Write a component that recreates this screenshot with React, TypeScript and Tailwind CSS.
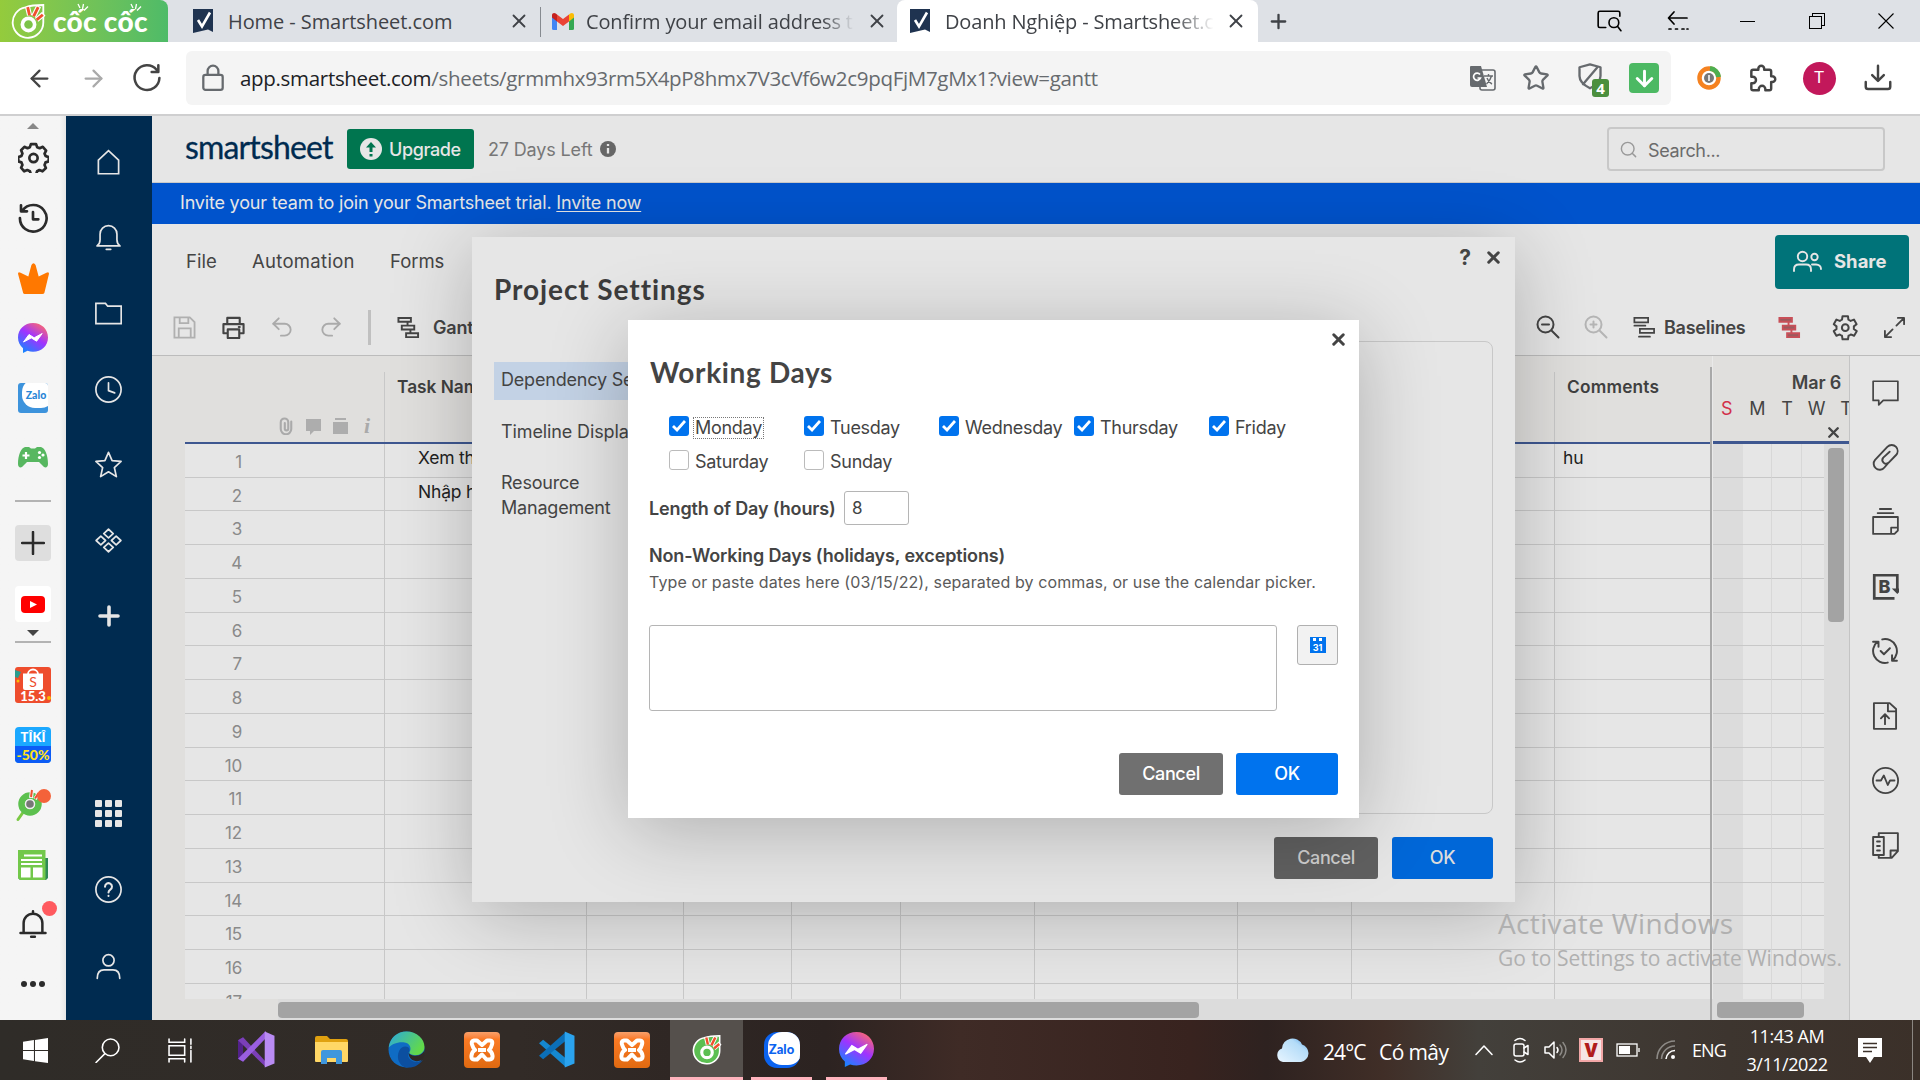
import React from "react";
import {
  ArrowLeft, ArrowRight, ArrowDown, Star, Search, Plus, X, Undo2, Redo2,
} from "lucide-react";

type SvgProps = {
  w?: number;
  h?: number;
  box?: string;
  sw?: number;
  className?: string;
  children: React.ReactNode;
};

function Svg({ w = 27, h, box = "0 0 24 24", sw = 1.5, className = "", children }: SvgProps) {
  return (
    <svg
      width={w}
      height={h ?? w}
      viewBox={box}
      fill="none"
      stroke="currentColor"
      strokeWidth={sw}
      strokeLinecap="round"
      strokeLinejoin="round"
      className={"shrink-0 " + className}
    >
      {children}
    </svg>
  );
}

const gearPath =
  "M19.4 13a7.6 7.6 0 0 0 0-2l2.1-1.6-2-3.5-2.5 1a7.5 7.5 0 0 0-1.7-1L15 3.3h-4.1l-.4 2.6a7.5 7.5 0 0 0-1.7 1l-2.5-1-2 3.5L6.4 11a7.6 7.6 0 0 0 0 2l-2.1 1.6 2 3.5 2.5-1a7.5 7.5 0 0 0 1.7 1l.4 2.6H15l.4-2.6a7.5 7.5 0 0 0 1.7-1l2.5 1 2-3.5z";

/* ---------- Logos ---------- */

function SmartsheetFavicon() {
  return (
    <svg width="20" height="24" viewBox="0 0 20 24" className="shrink-0">
      <path d="M0 0h20v23l-5-2.4L0 24z" fill="#1f3350" />
      <path d="M5 11l4 6.500 8-14" fill="none" stroke="#fff" strokeWidth="2.600" />
    </svg>
  );
}

function Gmail() {
  return (
    <svg width="22" height="17" viewBox="0 0 22 17" className="shrink-0">
      <path d="M0 2v13.500a1.500 1.500 0 0 0 1.500 1.500H5V6z" fill="#4285f4" />
      <path d="M22 2v13.500a1.500 1.500 0 0 1-1.500 1.500H17V6z" fill="#34a853" />
      <path d="M5 8.500L0 4.500V2.200C0 .2 2.200-.6 3.800.6L5 1.500z" fill="#c5221f" />
      <path d="M17 8.500l5-4V2.200c0-2-2.200-2.800-3.800-1.600L17 1.500z" fill="#fbbc04" />
      <path d="M5 1.500l6 4.600 6-4.600v7l-6 4.600-6-4.600z" fill="#ea4335" />
    </svg>
  );
}

function CocCocMark({ size = 34, filled = true }: { size?: number; filled?: boolean }) {
  const body = filled ? "#5cbf52" : "none";
  return (
    <svg width={size} height={size * 1.05} viewBox="0 0 34 36" className="shrink-0">
      <path d="M31.500 2v17A15 15 0 1 1 14 4.300C19 2.500 25 2 31.500 2z" fill={body} stroke="#fff" strokeWidth="1.800" />
      <path d="M18 12L16 3.500M22 13l5-10M25 16.500l7-6" stroke="#fff" strokeWidth="5" />
      <path d="M18 12L16.200 4M22 13l4.500-9M25 16.500l6-5" stroke="#f0502e" strokeWidth="2.800" />
      <circle cx="17" cy="21" r="6" fill={filled ? "#5cbf52" : "#7cc348"} stroke="#fff" strokeWidth="3.600" />
    </svg>
  );
}

function Messenger({ size = 30 }: { size?: number }) {
  return (
    <svg width={size} height={size} viewBox="0 0 30 30" className="shrink-0">
      <defs>
        <linearGradient id="msg" x1="0.150" y1="1" x2="0.800" y2="0">
          <stop offset="0" stopColor="#0a8cff" />
          <stop offset="0.550" stopColor="#a033ff" />
          <stop offset="1" stopColor="#ff6a6c" />
        </linearGradient>
      </defs>
      <path d="M15 0C6.500 0 0 6.200 0 14.500c0 4.500 1.900 8.200 5 10.700V30l4.500-2.200c1.700.6 3.600.9 5.500.9 8.500 0 15-6.100 15-14.300S23.500 0 15 0z" fill="url(#msg)" />
      <path d="M5.500 19l5.500-7.500 5.200 3.300 8-4.300-5.600 7.700-5.300-3.300z" fill="#fff" stroke="#fff" strokeWidth="1" />
    </svg>
  );
}

function Zalo({ dark = false }: { dark?: boolean }) {
  return dark ? (
    <div className="relative flex h-9 w-9 items-center justify-center overflow-hidden rounded-[13px] bg-[#0b63f0]">
      <div className="absolute -right-0.5 top-0 h-[33px] w-[34px] rounded-[14px] bg-white" />
      <span className="relative font-[Lato] text-[13px] font-black text-[#0b63f0]">Zalo</span>
    </div>
  ) : (
    <div className="relative flex h-[30px] w-[30px] items-center justify-center overflow-hidden rounded-[3px] bg-[#3d93dc]">
      <div className="absolute -right-1.5 -top-1 h-[29px] w-[32px] rounded-[13px] bg-white" />
      <span className="relative left-[3px] -top-0.5 font-[Lato] text-[10.500px] font-black text-[#2a86d6]">Zalo</span>
    </div>
  );
}

/* ---------- Browser chrome ---------- */

function TabStrip() {
  return (
    <div className="flex h-[42px] bg-[#dee1e6] text-[20px] tracking-[-0.080px] text-[#3f4247]">
      <div className="flex w-[168px] items-center rounded-tr-lg bg-gradient-to-r from-[#94cb3c] to-[#4ebb68] pl-[11px] text-white">
        <CocCocMark size={35} filled={false} />
        <div className="relative ml-[7px] whitespace-nowrap font-[Lato] text-[28px] font-black leading-none tracking-[0.300px]">
          cốc cốc
          <svg width="98" height="10" viewBox="0 0 98 10" className="absolute left-0 top-[-5px]" stroke="#fff" strokeWidth="1.300">
            <path d="M27 6l-2-4M29.500 7l1-5M31 8.500l4-4M80 6l-2-4M82.500 7l1-5M84 8.500l4-4" />
          </svg>
        </div>
      </div>
      <div className="flex w-[372px] items-center pl-[25px]">
        <SmartsheetFavicon />
        <span className="ml-[15px] w-[280px] whitespace-nowrap pt-px">Home - Smartsheet.com</span>
        <X size={22} strokeWidth={2} />
      </div>
      <div className="mt-[7px] h-[30px] w-px bg-[#868a90]" />
      <div className="flex w-[356px] items-center pl-[11px] tracking-[-0.140px]">
        <Gmail />
        <span className="ml-[12px] w-[268px] overflow-hidden whitespace-nowrap pt-px [mask-image:linear-gradient(to_right,black_88%,transparent)]">
          Confirm your email address to
        </span>
        <X size={22} strokeWidth={2} className="ml-[12px]" />
      </div>
      <div className="flex w-[361px] items-center rounded-t-lg bg-white pl-[13px] tracking-[-0.160px]">
        <SmartsheetFavicon />
        <span className="ml-[15px] w-[269px] overflow-hidden whitespace-nowrap pt-px [mask-image:linear-gradient(to_right,black_85%,transparent)]">
          Doanh Nghiệp - Smartsheet.com
        </span>
        <X size={22} strokeWidth={2} className="ml-[11px]" />
      </div>
      <div className="flex w-10 items-center justify-center">
        <Plus size={23} strokeWidth={2.400} />
      </div>
      <div className="ml-auto flex items-center text-black">
        <div className="flex w-[69px] justify-center">
          <Svg w={26} sw={1.500}><path d="M9 18H3.500A1.500 1.500 0 0 1 2 16.500v-12A1.500 1.500 0 0 1 3.500 3h17A1.500 1.500 0 0 1 22 4.500v3" /><circle cx="16.500" cy="13.500" r="4.500" /><path d="M20 17l3 4" /></Svg>
        </div>
        <div className="flex w-[69px] justify-center">
          <Svg w={24} sw={1.700}><path d="M21 9H3M8 3L2.500 9 8 15M3 20h2M9.500 20h2M16 20h2M21 20h1" /></Svg>
        </div>
        <div className="flex w-[70px] justify-center"><div className="h-px w-[15px] bg-black" /></div>
        <div className="flex w-[69px] justify-center">
          <svg width="16" height="16" viewBox="0 0 16 16" fill="none" stroke="#000" shapeRendering="crispEdges"><path d="M.5 3.500h12v12H.5zM3.500 3V.5h12v12H13" /></svg>
        </div>
        <div className="flex w-[69px] justify-center">
          <svg width="16" height="16" viewBox="0 0 16 16" stroke="#000" strokeWidth="1.100"><path d="M.5.5l15 15M15.500.5l-15 15" /></svg>
        </div>
      </div>
    </div>
  );
}

function AddressBar() {
  return (
    <div className="flex h-[74px] items-center border-b-2 border-[#cfcfd0] bg-white text-[#444]">
      <div className="flex w-[186px] items-center pl-[26px]">
        <ArrowLeft size={27} strokeWidth={2} className="shrink-0" />
        <ArrowRight size={27} strokeWidth={2} className="ml-[27px] shrink-0 text-[#aaa]" />
        <Svg w={32} sw={1.900} className="ml-6"><path d="M19.200 5.800A9.300 9.300 0 1 0 21.300 12M20.500 2.500v5h-5" /></Svg>
      </div>
      <div className="flex h-[54px] w-[1485px] items-center rounded-md bg-[#f4f4f4] pl-[15px] text-[#666a6e]">
        <Svg w={24} h={28} box="0 0 22 26" sw={2.100}><rect x="2" y="10" width="18" height="14" rx="2" /><path d="M6 10V6.500a5 5 0 0 1 10 0V10" /></Svg>
        <div className="ml-[15px] whitespace-nowrap text-[20.500px] tracking-[-0.310px]">
          <span className="text-[#202124]">app.smartsheet.com</span>/sheets/grmmhx93rm5X4pP8hmx7V3cVf6w2c9pqFjM7gMx1?view=gantt
        </div>
        <div className="ml-auto flex items-center">
          <div className="flex w-[54px] justify-center">
            <svg width="27" height="27" viewBox="0 0 27 27">
              <rect x="11" y="5" width="15" height="20" rx="2" fill="#f4f4f4" stroke="#666a6e" strokeWidth="1.600" />
              <path d="M2 1h10l6 21H3a2 2 0 0 1-2-2V2a1 1 0 0 1 1-1z" fill="#666a6e" />
              <path d="M11 9.500A3.600 3.600 0 1 0 11.500 13H8.500" stroke="#fff" strokeWidth="1.700" fill="none" />
              <path d="M15 11h9M19.500 9v2M22.500 11c-1 4-3 6-5 8M18 13c1 3 3 5 5 6" stroke="#666a6e" strokeWidth="1.400" fill="none" />
            </svg>
          </div>
          <div className="flex w-[54px] justify-center"><Star size={28} strokeWidth={2} /></div>
          <div className="relative flex w-[54px] justify-center">
            <Svg w={28} sw={2} className="-mt-1"><path d="M12 2l9 2.500V12c0 5-4 8-9 10.500C7 20 3 17 3 12V4.500zM18 5L6 19" /></Svg>
            <div className="absolute left-[29px] top-[13px] flex h-[18px] w-[17px] items-center justify-center rounded-[3px] bg-[#4b8f3e] text-[15px] font-bold text-white">4</div>
          </div>
          <div className="flex w-[54px] justify-center">
            <div className="flex h-[30px] w-[30px] items-center justify-center rounded bg-[#4cb963] text-white"><ArrowDown size={25} strokeWidth={2.800} /></div>
          </div>
        </div>
      </div>
      <div className="ml-[11px] flex w-[54px] justify-center">
        <svg width="24" height="24" viewBox="0 0 24 24" fill="none">
          <circle cx="12" cy="12" r="9.500" stroke="#f58220" strokeWidth="4.500" />
          <path d="M13 2.500A9.500 9.500 0 0 1 21.500 11" stroke="#4caf50" strokeWidth="5" />
          <circle cx="12" cy="12" r="5" fill="#777" /><path d="M12 9v6" stroke="#ddd" strokeWidth="2" />
        </svg>
      </div>
      <div className="flex w-[54px] justify-center">
        <Svg w={28} sw={2.100}><path d="M8 5V4a2.500 2.500 0 0 1 5 0v1h4.500a1.500 1.500 0 0 1 1.500 1.500V10.500h1a2.500 2.500 0 0 1 0 5h-1v5.500a1.500 1.500 0 0 1-1.500 1.500H14v-1a2.800 2.800 0 0 0-5.600 0v1H3.500A1.500 1.500 0 0 1 2 21v-4.500h1.200a2.800 2.800 0 0 0 0-5.600H2V6.500A1.500 1.500 0 0 1 3.500 5z" /></Svg>
      </div>
      <div className="flex w-[58px] justify-center">
        <div className="flex h-[33px] w-[33px] items-center justify-center rounded-full bg-[#c2185b] font-[Roboto] text-[17px] text-white">T</div>
      </div>
      <div className="flex w-[60px] justify-center">
        <Svg w={28} sw={2.100}><path d="M12 1.500v12M7 9.500l5 5 5-5M1.500 15.500v4a2 2 0 0 0 2 2h17a2 2 0 0 0 2-2v-4" /></Svg>
      </div>
    </div>
  );
}

/* ---------- Coc Coc side rail ---------- */

function Slot({ h, children }: { h: number; children: React.ReactNode }) {
  return (
    <div className="flex w-full shrink-0 items-center justify-center" style={{ height: h }}>
      {children}
    </div>
  );
}

function BrowserRail() {
  return (
    <div className="flex w-[66px] shrink-0 flex-col items-center bg-gradient-to-r from-[#f5f5f5] from-90% to-[#e6e6e6] text-[#2b2b2b]">
      <Slot h={20}><svg width="12" height="6"><path d="M0 6l6-6 6 6z" fill="#888" /></svg></Slot>
      <Slot h={42}>
        <Svg w={31} sw={2.600} box="0 0 30 30">
          <path d="M12.500 2h5l1 3 2.500 1 3-1.300 3.200 3.600-1.500 3 1 2.200 3 1.200v4l-3 1-1 2.500 1.300 3-3.300 3.200-3-1.300-2.200 1.200-1 3h-5l-1-3-2.500-1.200-3 1.300-3-3.500 1.300-2.700-1-2.500-3-1v-4l3-1.200 1-2.400L3 8l3.200-3.300 3 1.300 2.300-1z" />
          <circle cx="15" cy="15.500" r="4" />
        </Svg>
      </Slot>
      <Slot h={79}>
        <Svg w={32} sw={2}><path d="M4 6.500A10 10 0 1 1 2.200 12M3 2.500v4.500h4.500M12 7.500V13h4" /></Svg>
      </Slot>
      <Slot h={43}>
        <svg width="31" height="31" viewBox="0 0 30 30" fill="#ff7800"><path d="M5 29L0 10.500Q0 8 2.500 9.500L10 13 13 2q2-3.500 4 0l3 11 7.500-3.500Q30 8 30 10.500L25.500 29q-.5 1-2 1h-17q-1.200 0-1.500-1z" /></svg>
      </Slot>
      <Slot h={76}><Messenger /></Slot>
      <Slot h={44}><Zalo /></Slot>
      <Slot h={74}>
        <svg width="30" height="21" viewBox="0 0 30 21">
          <path d="M7 0h4l2 1.500h4L19 0h4c4 1 7 8 7 17 0 3-2 4-4 3l-5-5H9l-5 5c-2 1-4 0-4-3C0 8 3 1 7 0z" fill="#57b760" />
          <path d="M8 5v7M4.500 8.500h7" stroke="#fff" strokeWidth="2.200" />
          <g fill="#fff"><circle cx="21.500" cy="5.500" r="1.600" /><circle cx="21.500" cy="10.500" r="1.600" /><circle cx="25" cy="8" r="1.600" /></g>
        </svg>
      </Slot>
      <Slot h={13}><div className="h-0.5 w-9 bg-[#b3b3b3]" /></Slot>
      <Slot h={72}>
        <div className="flex h-9 w-9 items-center justify-center rounded bg-[#dedede]"><Svg w={24} sw={2.500}><path d="M12 1v22M1 12h22" /></Svg></div>
      </Slot>
      <Slot h={50}>
        <div className="flex h-9 w-9 items-center justify-center rounded bg-white">
          <div className="flex h-[17px] w-6 items-center justify-center rounded bg-[#ff0000]"><svg width="7" height="7"><path d="M0 0l7 3.500L0 7z" fill="#fff" /></svg></div>
        </div>
      </Slot>
      <Slot h={7}><svg width="12" height="6"><path d="M0 0h12L6 6z" fill="#444" /></svg></Slot>
      <Slot h={12}><div className="h-0.5 w-9 bg-[#b3b3b3]" /></Slot>
      <Slot h={73}>
        <div className="relative flex h-9 w-9 flex-col items-center justify-end overflow-hidden rounded-[3px] bg-[#ee4d2d]">
          <svg width="36" height="36" viewBox="0 0 36 36" className="absolute inset-0">
            <path d="M0 3l6 2-3 6-3-1z" fill="#2a9d8f" /><circle cx="34" cy="31" r="2" fill="#fbbc04" /><circle cx="3" cy="14" r="1.500" fill="#fbbc04" />
            <path d="M8 6.500h20V21a2 2 0 0 1-2 2H10a2 2 0 0 1-2-2z" fill="#fff" />
            <path d="M13 7a5 4.500 0 0 1 10 0" fill="none" stroke="#fff" strokeWidth="1.800" />
          </svg>
          <span className="absolute top-[5px] font-[Lato] text-[14px] leading-[19px] text-[#ee4d2d]">S</span>
          <span className="relative font-[Lato] text-[13px] font-black leading-[13px] text-white">15.3</span>
        </div>
      </Slot>
      <Slot h={47}>
        <div className="flex h-9 w-9 flex-col items-center overflow-hidden rounded bg-[#1ba8ff] font-[Lato] font-black text-white">
          <span className="h-[19px] pt-[2px] text-[13px] leading-[17px]">TÎKÎ</span>
          <span className="h-[17px] w-full bg-[#0d5cf5] text-center text-[14px] leading-[17px] text-[#ffe01b]">-50%</span>
        </div>
      </Slot>
      <Slot h={73}>
        <div className="relative flex h-9 w-9 items-center justify-center">
          <svg width="36" height="34" viewBox="0 0 36 34">
            <path d="M9 23l-6 8.500" stroke="#7ac943" strokeWidth="3" strokeLinecap="round" />
            <circle cx="15" cy="16" r="8.500" fill="none" stroke="#5cc04e" strokeWidth="6.500" />
            <circle cx="15" cy="16" r="5" fill="#eee" /><circle cx="15" cy="16" r="3.800" fill="#777" />
            <path d="M16 10l1-8M20 11l4-6" stroke="#f5f5f5" strokeWidth="4" /><path d="M16 9l1-7M20 10.500l3.500-5.500" stroke="#f0502e" strokeWidth="2" />
            <circle cx="29" cy="8" r="7" fill="#f4623a" />
          </svg>
        </div>
      </Slot>
      <Slot h={47}>
        <svg width="30" height="30" viewBox="0 0 30 30">
          <path d="M26 8h4v20l-2 2H2l-2-2z" fill="#2f8a55" /><path d="M0 0h27.500v30H2l-2-2z" fill="#72c84a" />
          <path d="M6 5.500h18M3 10h21M3 14h21" stroke="#fff" strokeWidth="1.800" /><path d="M3 17.500h9.500v10H3zM15 17.500h9.500v10H15z" fill="#fff" />
        </svg>
      </Slot>
      <Slot h={70}>
        <div className="relative flex">
          <Svg w={30} sw={2}><path d="M2 20h20M4.500 20v-8a7.500 7.500 0 0 1 15 0v8M12 4V2.500M10.500 23h3" /></Svg>
          <div className="absolute -top-[7px] left-[24px] h-[15px] w-[15px] rounded-full bg-[#ff5a5f]" />
        </div>
      </Slot>
      <Slot h={51}><svg width="24" height="6" fill="#2b2b2b"><circle cx="3" cy="3" r="3" /><circle cx="12" cy="3" r="3" /><circle cx="21" cy="3" r="3" /></svg></Slot>
    </div>
  );
}

/* ---------- Smartsheet navigation ---------- */

function NavRail() {
  return (
    <div className="flex w-[86px] shrink-0 flex-col bg-[#002b50] pt-[8px] pr-px text-[#e6e6e6]">
      <Slot h={75.700}><Svg className="mt-px"><path d="M3 9.800L12 1.500l9 8.300V22H3z" strokeLinejoin="miter" /></Svg></Slot>
      <Slot h={75.700}><Svg><path d="M1.800 19.500h20.400c-2-1.500-2.700-3-2.700-5.500V9a7.500 7.500 0 0 0-15 0v5c0 2.500-.7 4-2.700 5.500zM10 22.500h4" /></Svg></Slot>
      <Slot h={75.700}><Svg><path d="M.8 21V3h8.500l2 2.500h12V21z" strokeLinejoin="miter" /></Svg></Slot>
      <Slot h={75.700}><Svg className="mt-px"><circle cx="12" cy="12" r="11.200" /><path d="M12 6v7l5.500 2" /></Svg></Slot>
      <Slot h={75.700}><Svg><path d="M12 1.200l3.200 7.400 8 .7-6 5.400 1.800 8.100L12 18.500l-7 4.300 1.800-8.100-6-5.400 8-.7z" /></Svg></Slot>
      <Slot h={75.700}><Svg><path d="M12 2l4.200 3.800L12 9.600 7.800 5.800zM12 14.400l4.200 3.800L12 22l-4.200-3.800zM5.200 8.200l4.200 3.800-4.200 3.800L1 12zM18.800 8.200L23 12l-4.200 3.800-4.200-3.800z" /></Svg></Slot>
      <Slot h={75.700}><Svg w={24} sw={3.600}><path d="M12 3v18M3 12h18" /></Svg></Slot>
      <div className="mb-[15px] mt-auto">
        <Slot h={76}>
          <div className="grid grid-cols-3 gap-[3px]">
            {Array.from({ length: 9 }, (_, i) => <div key={i} className="h-[7px] w-[7px] rounded-[1px] bg-[#e6e6e6]" />)}
          </div>
        </Slot>
        <Slot h={76}><Svg><circle cx="12" cy="12" r="11.200" /><path d="M8.900 9.500a3.100 3.100 0 1 1 4.700 2.600c-1.100.7-1.600 1.200-1.600 2.600M12 17.500v.3" strokeWidth="1.800" /></Svg></Slot>
        <Slot h={78}><Svg><circle cx="12" cy="6.500" r="5" /><path d="M2 22.500c0-5 2.500-7.500 6-7.500h8c3.500 0 6 2.500 6 7.500" /></Svg></Slot>
      </div>
    </div>
  );
}

/* ---------- Sheet ---------- */

const sheetColumns = "grid grid-cols-[200px_202px_97px_108px_109px_134px_203px_114px_203px_155px]";
const rows = Array.from({ length: 17 }, (_, i) => ({
  n: i + 1,
  task: i === 0 ? "Xem thông tin" : i === 1 ? "Nhập hàng" : "",
  comment: i === 0 ? "hu" : "",
}));

function GanttIcon({ className = "", fill = "none" }: { className?: string; fill?: string }) {
  return (
    <Svg w={23} sw={2} className={className}>
      <g strokeLinejoin="miter" fill={fill}><path d="M1.500 2h13v4h-13zM5 10h13v4H5zM9.500 18H22v4H9.500zM11 6v4M14 14v4" /></g>
    </Svg>
  );
}

function AppHeader() {
  return (
    <div className="flex h-[67px] items-center border-b border-[#c9c9c9] bg-[#e6e6e6] pl-[33px]">
      <div className="w-[162px] pb-1 font-[Lato] text-[32px] leading-none tracking-[-0.850px] text-[#002b50] [-webkit-text-stroke:0.300px_#002b50]">smartsheet</div>
      <div className="flex h-10 w-[127px] items-center rounded-[3px] bg-[#00754f] pl-[13px] text-[18px] font-medium tracking-[-0.400px] text-[#e6e6e6]">
        <svg width="22" height="22" viewBox="0 0 22 22"><circle cx="11" cy="11" r="11" fill="#e6e6e6" /><path d="M11 4l5 5.500h-3.500V14h-3V9.500H6zM9.500 16h3v2.500h-3z" fill="#00754f" /></svg>
        <span className="ml-[7px]">Upgrade</span>
      </div>
      <div className="ml-[14px] w-[112px] whitespace-nowrap text-[18px] tracking-[-0.150px] text-[#777]">27 Days Left</div>
      <svg width="16" height="16" viewBox="0 0 16 16"><circle cx="8" cy="8" r="8" fill="#666" /><path d="M8 3v2M8 7v5.500" stroke="#e6e6e6" strokeWidth="2.300" /></svg>
      <div className="ml-auto mr-[35px] flex h-11 w-[278px] items-center rounded border-2 border-[#c8c8c8] pl-[10px] text-[18px] tracking-[-0.350px] text-[#6b6b6b]">
        <Search size={19} strokeWidth={1.800} className="mr-[10px] text-[#999]" /><span className="pt-0.5">Search...</span>
      </div>
    </div>
  );
}

function MenuBar() {
  return (
    <div className="flex h-[71px] items-center bg-[#e6e6e6] pl-[34px] pt-1 text-[18.500px] text-[#444]">
      <span className="w-[66px]">File</span>
      <span className="w-[138px] tracking-[0.300px]">Automation</span>
      <span className="tracking-[-0.050px]">Forms</span>
      <div className="ml-auto mr-[11px] flex h-[54px] w-[134px] items-center rounded bg-[#007379] pl-[18px] text-[18px] font-bold text-[#e6e6e6]">
        <Svg w={29} h={23} box="0 0 29 23" sw={1.900}>
          <circle cx="9.500" cy="6.500" r="4.700" /><circle cx="21.500" cy="7" r="3.200" />
          <path d="M1 21v-1.500c0-3 2-5 5-5h7c3 0 5 2 5 5V21M19 14.500h4c3 0 5 2 5 4.500" />
        </Svg>
        <span className="ml-3 text-[18.500px]">Share</span>
      </div>
    </div>
  );
}

function ToolBar() {
  return (
    <div className="flex h-[61px] items-center border-b border-[#bcbcbc] bg-[#e6e6e6] pl-[21px] pt-1 text-[18px] font-semibold text-[#444]">
      <Svg w={23} sw={1.900} className="text-[#b0b0b0]"><path d="M1.500 1.500h16l5 5v16h-21zM7 2v5.500h9V2M6 22v-9h12.500v9" strokeLinejoin="miter" /></Svg>
      <Svg w={23} sw={2.200} className="ml-[26px]"><path d="M5.500 8V2h13v6M5.500 18H1.500V8.500h21V18h-4M6 14h12v9H6zM17.500 11.500h1" /></Svg>
      <Undo2 size={26} strokeWidth={1.700} className="ml-[24px] text-[#aaa]" />
      <Redo2 size={26} strokeWidth={1.700} className="ml-[23px] text-[#aaa]" />
      <div className="ml-[24px] h-[35px] w-[3px] bg-[#c0c0c0]" />
      <GanttIcon className="ml-[26px]" />
      <span className="ml-[13px] tracking-[-0.200px]">Gantt</span>
      <div className="ml-auto flex items-center">
        <Svg w={24} sw={2}><circle cx="9.500" cy="9.500" r="8" /><path d="M15.500 15.500l7 7M6 9.500h7" /></Svg>
        <Svg w={24} sw={2} className="ml-6 text-[#b5b5b5]"><circle cx="9.500" cy="9.500" r="8" /><path d="M15.500 15.500l7 7M6.500 9.500h6M9.500 6.500v6" /></Svg>
        <Svg w={22} sw={1.900} className="ml-[25px]"><path d="M1.500 2h15v5h-15zM1.500 10.500h12M7.500 14H23v4.500H7.500zM6.500 22.500h12" strokeLinejoin="miter" /></Svg>
        <span className="ml-[9px] w-[114px] tracking-[-0.250px]">Baselines</span>
        <GanttIcon className="text-[#c84f58]" fill="#9b5a5e" />
        <Svg w={27} sw={1.800} className="ml-[31px]"><path d={gearPath} transform="translate(-3.500 -2) scale(1.180)" strokeWidth="1.500" /><circle cx="11.800" cy="12.200" r="3" /></Svg>
        <Svg w={23} sw={1.900} className="ml-[24px] mr-[14px]"><path d="M14 10l8-8M15.500 2H22v6.500M10 14l-8 8M2 15.500V22h6.500" /></Svg>
      </div>
    </div>
  );
}

function SheetGrid() {
  return (
    <div className="flex min-w-0 flex-1 flex-col">
      <div className="flex h-[643px] overflow-hidden pl-[33px]">
        <div className="flex w-[1525px] shrink-0 flex-col">
          <div className={"h-[86px] shrink-0 pt-4 text-[17.300px] font-semibold text-[#3f3f3f] " + sheetColumns}>
            <div className="flex items-end justify-end gap-[8px] border-r border-[#c8c8c8] pb-[7px] pr-[10px] text-[#aaa]">
              <Svg w={18} sw={2.800}><path d="M19 6v10a7 7 0 0 1-14 0V7a5 5 0 0 1 10 0v8.500a2.300 2.300 0 0 1-4.600 0V8" /></Svg>
              <svg width="17" height="17" fill="#adadad" className="ml-[2px]"><path d="M1 1h15v12H9l-4 4v-4H1z" /></svg>
              <svg width="17" height="17" fill="#adadad" className="ml-[2px]"><path d="M3 0h11v2H3zM1 4h15v12H1z" /></svg>
              <span className="ml-[3px] w-[14px] text-center font-['Liberation_Serif'] text-[22px] font-bold italic leading-[18px]">i</span>
            </div>
            {["Task Name", "", "", "", "", "", "", ""].map((t, i) => (
              <div key={i} className="border-r border-[#c8c8c8] pl-[12px] pt-0.5">{t}</div>
            ))}
            <div className="pl-[12px] pt-0.5 tracking-[0.200px]">Comments</div>
          </div>
          <div className="h-0.5 shrink-0 bg-[#3e5790]" />
          <div className="-mt-[0.250px] bg-[#e6e6e6]">
            {rows.map((r) => (
              <div key={r.n} className={"h-[33.750px] text-[17.500px] tracking-[-0.200px] text-[#222] " + sheetColumns}>
                <div className="border-b border-r border-[#c8c8c8] pr-[142px] pt-1.5 text-right text-[17px] text-[#8a8a8a]">{r.n}</div>
                <div className="border-b border-r border-[#c8c8c8] pl-[33px] pt-px">{r.task}</div>
                {[0, 1, 2, 3, 4, 5, 6].map((c) => <div key={c} className="border-b border-r border-[#c8c8c8]" />)}
                <div className="border-b border-[#c8c8c8] pl-2 pt-px">{r.comment}</div>
              </div>
            ))}
          </div>
        </div>
        <div className="mt-[11px] w-0.5 shrink-0 bg-[#a9a9a9]" />
        <div className="w-px shrink-0 bg-[#e9e9e9]" />
        <div className="flex w-[136px] shrink-0 flex-col">
          <div className="h-[85px] shrink-0 overflow-hidden text-[#444]">
            <div className="mt-[15px] pr-2 text-right text-[18px] font-semibold leading-[24px] tracking-[-0.200px]">Mar 6</div>
            <div className="flex w-[160px] pt-[2px] text-[18px] leading-[24px]">
              {["S", "M", "T", "W", "T"].map((d, i) => (
                <span key={i} className={"w-[29.600px] text-center " + (i === 0 ? "-ml-px mr-px text-[#d2314a]" : "")}>{d}</span>
              ))}
            </div>
            <X size={17} strokeWidth={3.400} className="ml-[112px] mt-[3px]" />
          </div>
          <div className="h-[3px] shrink-0 bg-[#3e5790]" />
          <div className="-mt-[0.250px] flex flex-1">
            <div className="w-[111px]">
              {rows.map((r) => (
                <div key={r.n} className="grid h-[33.750px] grid-cols-[30px_29px_30px_22px]">
                  <div className="border-b border-[#c8c8c8] bg-[#dcdcdc]" />
                  <div className="border-b border-r border-b-[#c8c8c8] border-r-[#d8d8d8] bg-[#e6e6e6]" />
                  <div className="border-b border-r border-b-[#c8c8c8] border-r-[#d8d8d8] bg-[#e6e6e6]" />
                  <div className="border-b border-[#c8c8c8] bg-[#e6e6e6]" />
                </div>
              ))}
            </div>
            <div className="w-[25px] bg-[#dcdcdc] pl-1 pt-1"><div className="h-[174px] w-4 rounded bg-[#a3a3a3]" /></div>
          </div>
        </div>
      </div>
      <div className="flex h-[21px] items-center">
        <div className="h-full w-[126px]" />
        <div className="flex h-full w-[1432px] items-center bg-[#dcdcdc]"><div className="h-4 w-[921px] rounded bg-[#a3a3a3]" /></div>
        <div className="h-full w-0.5 bg-[#a9a9a9]" />
        <div className="flex h-full flex-1 items-center bg-[#dcdcdc] pl-[5px]"><div className="h-4 w-[87px] rounded bg-[#a3a3a3]" /></div>
      </div>
    </div>
  );
}

function RightRail() {
  return (
    <div className="flex w-[71px] shrink-0 flex-col border-l border-[#c4c4c4] bg-[#e6e6e6] pt-1 text-[#444]">
      <Slot h={64.700}><Svg><path d="M1 2h22v17H10l-4 4v-4H1z" /></Svg></Slot>
      <Slot h={64.700}><Svg w={28} sw={1.600}><path d="M14.500 17.500l-3 3.500a5 5 0 0 1-7.500.5 5 5 0 0 1-.5-7L14 3.300a5.300 5.300 0 0 1 7.500 0 5.300 5.300 0 0 1 0 7L15 17a3.200 3.200 0 0 1-4.500-4.500L16 7.500" /></Svg></Slot>
      <Slot h={64.700}><Svg w={27} sw={1.600}><path d="M7 .9h10M5 4.500h14M1 8h22v12l-3 3H1zM23 17.500h-6V23" /></Svg></Slot>
      <Slot h={64.700}>
        <div className="relative flex">
          <Svg w={27} sw={2.400}><path d="M20 22.500H2V2h20.500v14M20.500 15h4l-2 2z" strokeLinejoin="miter" strokeLinecap="butt" /></Svg>
          <span className="absolute left-[7px] top-0 text-[18px] font-extrabold leading-[27px]">B</span>
        </div>
      </Slot>
      <Slot h={64.700}><Svg w={26} sw={1.800}><path d="M14.500 22.700A11 11 0 0 1 5 3.500M1 3.500h5V8M9.500 1.300A11 11 0 0 1 19 20.500M23 21h-4.500v-5M8 12l3 3 5.500-5.500" /></Svg></Slot>
      <Slot h={64.700}><Svg w={28} sw={1.600}><path d="M2.500 1H16l5.500 5v17h-19zM14.500 1v7h7M12 19v-8M8.500 14l3.500-3.500 3.500 3.500" /></Svg></Slot>
      <Slot h={64.700}><Svg w={27} sw={1.600}><circle cx="12" cy="12" r="11.200" /><path d="M4 12h4l2.500-4.500L14 16l2-4h4" /></Svg></Slot>
      <Slot h={64.700}><Svg w={27} sw={1.700}><path d="M6 4V1h17v16l-5.500 6H6v-2.500M23 16.500h-6.500V23M1 4.500h9.500v16H1zM4.500 8.500h2.500M4.500 12.500h2.500M4.500 16.500h2.500" /></Svg></Slot>
    </div>
  );
}

/* ---------- Dialogs ---------- */

function DialogButton({ primary, dim, children }: { primary?: boolean; dim?: boolean; children: React.ReactNode }) {
  const color = primary
    ? dim ? "w-[101px] bg-[#0067d8] text-[#dcdcdc]" : "w-[102px] bg-[#0073ee] text-white"
    : dim ? "w-[104px] bg-[#606060] text-[#cfcfcf]" : "w-[104px] bg-[#707070] text-white";
  return (
    <button className={"flex h-[42px] items-center justify-center rounded-[3px] pb-px text-[18px] font-medium tracking-[-0.350px] " + color}>
      {children}
    </button>
  );
}

function ProjectSettings() {
  return (
    <div className="absolute left-[320px] top-[121px] h-[665px] w-[1043px] bg-[#e6e6e6] pl-[22px] pr-[22px] text-[18px] text-[#444] shadow-[0_12px_75px_rgba(0,0,0,0.240)]">
      <div className="flex h-[35px] items-center justify-end gap-[13px] pt-[5px]">
        <span className="text-[21px] font-bold leading-none">?</span>
        <X size={19} strokeWidth={3.800} className="-mr-[10px]" />
      </div>
      <h1 className="font-[Lato] text-[28px] font-bold leading-[34px] tracking-[0.920px] text-[#3c3c3c]">Project Settings</h1>
      <div className="mt-[35px] flex h-[473px]">
        <div className="w-[180px] shrink-0 pt-[21px] tracking-[-0.200px]">
          <div className="flex h-[38px] items-center whitespace-nowrap bg-[#c3d2e5] pl-[7px] pb-[3px]">Dependency Settings</div>
          <div className="flex h-[63px] items-center whitespace-nowrap pl-[7px] tracking-[-0.120px]">Timeline Display</div>
          <div className="pl-[7px] pt-[7px] leading-[25px]">Resource Management</div>
        </div>
        <div className="flex-1 rounded-lg border border-[#c8c8c8]" />
      </div>
      <div className="mt-[23px] flex justify-end gap-[14px]">
        <DialogButton dim>Cancel</DialogButton>
        <DialogButton dim primary>OK</DialogButton>
      </div>
    </div>
  );
}

const days: [string, boolean][] = [
  ["Monday", true], ["Tuesday", true], ["Wednesday", true], ["Thursday", true], ["Friday", true],
  ["Saturday", false], ["Sunday", false],
];

function WorkingDays() {
  return (
    <div className="absolute left-[476px] top-[204px] h-[498px] w-[731px] bg-white pl-[21px] pr-[21px] text-[18px] text-[#444] shadow-[0_12px_75px_rgba(0,0,0,0.240)]">
      <div className="flex h-[35px] items-center justify-end pt-[3px]"><X size={19} strokeWidth={3.800} className="-mr-[10px]" /></div>
      <h2 className="pl-px font-[Lato] text-[28px] font-bold leading-[34px] tracking-[0.650px]">Working Days</h2>
      <div className="mt-[22px] grid grid-cols-[repeat(5,135px)] pl-[20px] tracking-[-0.280px]">
        {days.map(([d, on], i) => (
          <div key={d} className="flex h-[34px] items-center">
            <div className={"-mt-1 flex h-5 w-5 shrink-0 items-center justify-center rounded-[3px] " + (on ? "bg-[#0073ee]" : "border border-[#bbb] bg-white")}>
              {on && <svg width="14" height="12" viewBox="0 0 14 12"><path d="M1 6l4 4 8-9" fill="none" stroke="#fff" strokeWidth="2.800" /></svg>}
            </div>
            <span className={"-mt-px ml-1 border px-px leading-[20px] " + (i === 0 ? "border-dotted border-[#777]" : "border-transparent")}>{d}</span>
          </div>
        ))}
      </div>
      <div className="mt-[12px] flex h-[34px] items-center">
        <span className="w-[195px] whitespace-nowrap pt-px font-semibold tracking-[-0.130px]">Length of Day (hours)</span>
        <div className="flex h-[34px] w-[65px] items-center rounded-[3px] border border-[#b5b5b5] pl-[7px] pt-0.5 text-[17px]">8</div>
      </div>
      <div className="mt-[18px] whitespace-nowrap font-semibold leading-[26px] tracking-[-0.130px]">Non-Working Days (holidays, exceptions)</div>
      <div className="-mt-px whitespace-nowrap text-[16px] leading-[28px] tracking-[0.100px] text-[#5a5a5a]">
        Type or paste dates here (03/15/22), separated by commas, or use the calendar picker.
      </div>
      <div className="mt-[29px] flex items-start justify-between">
        <div className="h-[86px] w-[628px] rounded-[3px] border border-[#b5b5b5]" />
        <div className="flex h-10 w-[41px] items-center justify-center rounded-[3px] border border-[#b0b0b0] bg-[#f2f2f2]">
          <div className="flex h-4 w-4 flex-col items-center bg-[#0073ee]">
            <div className="mt-px flex gap-[3px]"><div className="h-[3px] w-[3px] bg-white" /><div className="h-[3px] w-[3px] bg-white" /></div>
            <span className="pt-px text-[9px] font-bold leading-[11px] text-white">31</span>
          </div>
        </div>
      </div>
      <div className="mt-[42px] flex justify-end gap-[13px]">
        <DialogButton>Cancel</DialogButton>
        <DialogButton primary>OK</DialogButton>
      </div>
    </div>
  );
}

/* ---------- Windows taskbar ---------- */

function VsCode({ purple = false }: { purple?: boolean }) {
  return (
    <svg width="37" height="37" viewBox="0 0 36 36">
      {purple ? (
        <>
          <path d="M0 9l5-3v24l-5-3z" fill="#52218a" />
          <path d="M5 6l22 24v5L0 9z" fill="#7b3fb8" />
          <path d="M5 30L27 7V0L0 27z" fill="#9a5fe0" />
        </>
      ) : (
        <>
          <path d="M1 12l4-3.500 22 18V35z" fill="#1588d0" />
          <path d="M1 24l4 3.500 22-18V1z" fill="#0b6fb8" />
        </>
      )}
      <path d="M26 .5l9.500 4v27l-9.500 4z" fill={purple ? "#b98bf3" : "#2ba3ee"} />
    </svg>
  );
}

function Xampp() {
  return (
    <div className="flex h-9 w-9 items-center justify-center rounded-[4px] bg-gradient-to-b from-[#f8a06a] via-[#fb7a24] via-20% to-[#e06a10]">
      <svg width="26" height="24" viewBox="0 0 26 24" fill="none" stroke="#fff" strokeWidth="4" strokeLinejoin="round">
        <path d="M5 2.500h3l5 4.500 5-4.500h3q3 0 2 4-1 4-3 5.500 3 2 3.500 5.500t-3 4h-3L13 16.500 8 21.500H5q-3 0-2.500-4T6 12Q4 10 3 6.500t2-4z" />
        <path d="M9 12h8" />
      </svg>
    </div>
  );
}

function Edge() {
  return (
    <svg width="37" height="37" viewBox="0 0 36 36">
      <defs>
        <linearGradient id="edgeTop" x1="0" y1="0" x2="1" y2="0.500"><stop offset="0" stopColor="#2aa8e0" /><stop offset="1" stopColor="#62d94a" /></linearGradient>
      </defs>
      <circle cx="18" cy="18" r="17.500" fill="#0f6cc4" />
      <path d="M.7 16C2 6.500 9 .5 18 .5c10 0 17.500 7 17.500 15 0 5-4 8-9 8-4 0-6-1.500-5.500-3 2-3 1-9-6-9.500C9 10.500 3.500 13 .7 16z" fill="url(#edgeTop)" />
      <path d="M20 21c-2 5 3 9 8 9 3 0 5-1 6-2-4 6-11 9-18 7-6-3-8-10-5-16 2-4 6-5 9-3 1 1 1.500 3 0 5z" fill="#0c4fa0" />
      <path d="M20 21c1 3 6 3.500 10 2.500 3-1 5-3 5.400-5C36 22 35 26 33 28c-5 3-13 1-13-7z" fill="#2f2825" />
    </svg>
  );
}

function AppCell({ active, running, children }: { active?: boolean; running?: boolean; children: React.ReactNode }) {
  return (
    <div className="flex h-full w-[75px] justify-center">
      <div className={"flex h-full flex-col items-center " + (active ? "w-[73px] bg-[#55504c]" : "w-[61px]")}>
        <div className="flex flex-1 items-center pt-0.5">{children}</div>
        <div className={"h-[3px] w-full " + (running ? "bg-[#ffb3bd]" : "")} />
      </div>
    </div>
  );
}

function Taskbar() {
  return (
    <div className="flex h-[60px] items-center bg-[linear-gradient(to_right,#2f2c28_0%,#322b27_27%,#2c2321_43%,#3f2b26_50%,#38231f_62%,#2e2220_66%,#402e27_72%,#43403b_77%,#3d352f_90%,#3b3029_100%)] text-[20px] text-white">
      <div className="flex w-[71px] justify-center">
        <svg width="25" height="25" viewBox="0 0 24 24" fill="#fff"><path d="M0 3.500L10.500 2v9.500H0zM11.500 1.800L24 0v11.500H11.500zM0 12.500h10.500V22L0 20.500zM11.500 12.500H24V24l-12.500-1.800z" /></svg>
      </div>
      <div className="flex w-[73px] justify-center"><Svg w={25} sw={1.500}><circle cx="15" cy="9" r="8" /><path d="M9.500 15L1 23.500" /></Svg></div>
      <div className="flex w-[75px] justify-center pr-[3px]">
        <Svg w={25} sw={1.500}><path d="M1 1v3h15V1M1 23v-3h15v3M1 7.500h15v9H1zM22 1v5M22 12v11M22 8v2" strokeLinejoin="miter" /></Svg>
      </div>
      <AppCell><VsCode purple /></AppCell>
      <AppCell>
        <svg width="33" height="28" viewBox="0 0 33 28"><path d="M0 2a2 2 0 0 1 2-2h10l3 3h16a2 2 0 0 1 2 2v4H0z" fill="#e0a110" /><path d="M0 6h33v19a1 1 0 0 1-1 1H1a1 1 0 0 1-1-1z" fill="#ffd766" /><path d="M6 16a2 2 0 0 1 2-2h17a2 2 0 0 1 2 2v12h-6v-6h-9v6H6z" fill="#3f97dd" /></svg>
      </AppCell>
      <AppCell><Edge /></AppCell>
      <AppCell><Xampp /></AppCell>
      <AppCell><VsCode /></AppCell>
      <AppCell><Xampp /></AppCell>
      <AppCell active running><CocCocMark size={30} /></AppCell>
      <AppCell running><Zalo dark /></AppCell>
      <AppCell running><Messenger size={35} /></AppCell>
      <div className="ml-auto flex h-full items-center">
        <svg width="33" height="24" viewBox="0 0 33 24"><defs><linearGradient id="cl" x1="0" y1="1" x2="1" y2="0"><stop offset="0" stopColor="#e8f5ff" /><stop offset="0.700" stopColor="#b4dcf8" /><stop offset="1" stopColor="#4b9ae8" /></linearGradient></defs><path d="M7 24a7 7 0 0 1-1-13.500A10.500 10.500 0 0 1 26 6.500 9 9 0 0 1 25 24z" fill="url(#cl)" /></svg>
        <span className="ml-[14px] w-[56px] whitespace-nowrap pt-1.5 text-[21px] tracking-[-0.900px]">24°C</span>
        <span className="w-[95px] whitespace-nowrap pt-1.5 text-[21px] tracking-[-0.600px]">Có mây</span>
        <Svg w={20} h={12} box="0 0 20 12" sw={1.600}><path d="M2 10.500l8-8.500 8 8.500" /></Svg>
        <Svg w={20} h={30} box="0 0 20 30" sw={1.500} className="ml-[17px]"><rect x="3" y="9" width="10" height="12" rx="2" /><path d="M13 13l4-2.500v9L13 17M4 5.500q5-4 10 0M4 25q5 4 10 0" /></Svg>
        <Svg w={24} h={22} box="0 0 24 22" sw={1.500} className="ml-[13px]"><path d="M1 8h4l5-5v16l-5-5H1zM13 8.500q2 2.500 0 5" /><path d="M16 6q4 5 0 10M19 3.500q6 7.500 0 15" stroke="#8d8a86" /></Svg>
        <div className="ml-[11px] flex h-6 w-6 items-center justify-center border-2 border-[#f2a7a7] bg-[#f6e6e6] font-['Open_Sans'] text-[19px] font-extrabold text-[#b01c1c]">V</div>
        <svg width="24" height="14" viewBox="0 0 24 14" className="ml-[13px]" fill="none" stroke="#fff" strokeWidth="1.300"><rect x="1" y="1" width="20" height="12" /><path d="M23 5v4" /><rect x="3" y="3" width="11" height="8" fill="#fff" stroke="none" /></svg>
        <svg width="20" height="20" viewBox="0 0 20 20" className="ml-[16px]" fill="none" strokeWidth="1.600"><path d="M1 19A18 18 0 0 1 19 1M5.500 19A13.500 13.500 0 0 1 19 6" stroke="#8d8a86" /><path d="M10 19a9 9 0 0 1 9-8.500" stroke="#fff" /><circle cx="17" cy="17" r="2" fill="#fff" /></svg>
        <span className="ml-[16px] w-[44px] pt-px text-[18px] tracking-[-0.900px]">ENG</span>
        <div className="flex w-[102px] flex-col items-center whitespace-nowrap text-[18px] leading-[28px] tracking-[-0.450px]">
          <span>11:43 AM</span>
          <span>3/11/2022</span>
        </div>
        <svg width="24" height="25" viewBox="0 0 24 25" className="ml-[20px]"><path d="M0 0h24v19h-8l-4 6-4-6H0z" fill="#fff" /><path d="M5 5.500h14M5 9.500h14M5 13.500h9" stroke="#3d322b" strokeWidth="1.300" /></svg>
        <div className="ml-[30px] mr-[7px] h-full w-px bg-[#8b8681]" />
      </div>
    </div>
  );
}

export default function App() {
  return (
    <div className="flex h-[1080px] w-[1920px] flex-col overflow-hidden bg-white font-['Open_Sans',sans-serif]">
      <TabStrip />
      <AddressBar />
      <div className="flex h-[904px]">
        <BrowserRail />
        <NavRail />
        <div className="relative flex min-w-0 flex-1 flex-col overflow-hidden bg-[#e0dfdd] font-[Inter,sans-serif]">
          <AppHeader />
          <div className="flex h-[41px] items-center bg-[#0053cc] pb-0.5 pl-7 text-[18px] tracking-[-0.190px] text-[#e6e6e6]">
            Invite your team to join your Smartsheet trial.&nbsp;<span className="underline underline-offset-2">Invite now</span>
          </div>
          <MenuBar />
          <ToolBar />
          <div className="flex flex-1">
            <SheetGrid />
            <RightRail />
          </div>
          <ProjectSettings />
          <WorkingDays />
          <div className="absolute left-[1346px] top-[786px] whitespace-nowrap font-['Open_Sans',sans-serif] text-[#b0b0b0]">
            <div className="text-[28px] leading-[42px] tracking-[0.350px]">Activate Windows</div>
            <div className="text-[21px] leading-[28px]">Go to Settings to activate Windows.</div>
          </div>
        </div>
      </div>
      <Taskbar />
    </div>
  );
}
